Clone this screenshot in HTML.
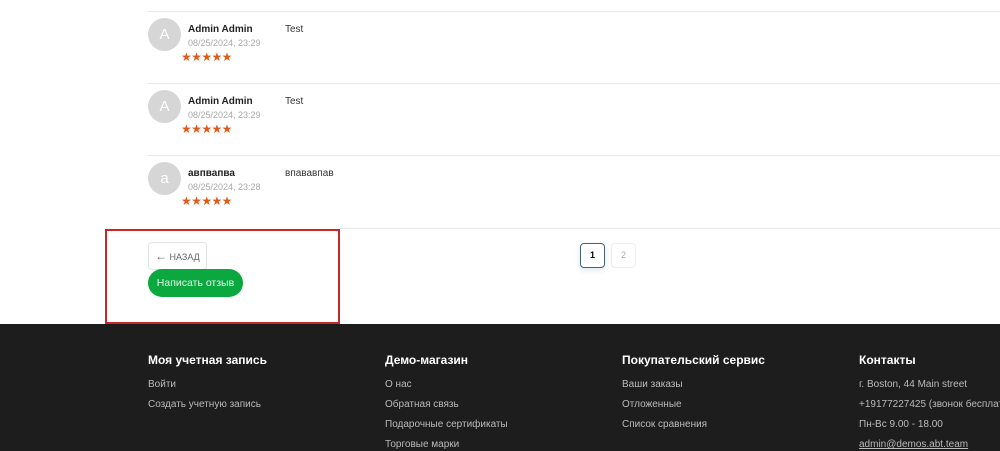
<!DOCTYPE html>
<html><head><meta charset="utf-8"><style>
*{margin:0;padding:0;box-sizing:border-box}
body{width:1000px;height:451px;overflow:hidden;background:#fff;font-family:"Liberation Sans",sans-serif;position:relative}
.a{position:absolute}
.line{position:absolute;left:148px;right:0;height:1px;background:#e8e8e8}
.av{position:absolute;left:148px;width:33px;height:33px;border-radius:50%;background:#d6d6d6;color:#fff;font-size:15px;text-align:center;line-height:33px}
.nm{position:absolute;left:188px;font-size:10px;font-weight:bold;color:#222}
.dt{position:absolute;left:188px;font-size:9px;color:#aaa}
.st{position:absolute;left:181px;font-size:12px;color:#e05a1c;letter-spacing:-0.6px}
.tx{position:absolute;left:285px;font-size:10px;color:#333}
.foot{position:absolute;left:0;top:324px;width:1000px;height:127px;background:#1d1d1d}
.h{position:absolute;top:353px;color:#fff;font-weight:bold;font-size:12px}
.l{position:absolute;color:#bbb;font-size:10px}
</style></head><body>
<div class="line" style="top:11px"></div>
<div class="av" style="top:18px">A</div><div class="nm" style="top:24px">Admin Admin</div><div class="dt" style="top:38px">08/25/2024, 23:29</div><div class="st" style="top:50px">★★★★★</div><div class="tx" style="top:24px">Test</div>
<div class="line" style="top:83px"></div>
<div class="av" style="top:90px">A</div><div class="nm" style="top:96px">Admin Admin</div><div class="dt" style="top:110px">08/25/2024, 23:29</div><div class="st" style="top:122px">★★★★★</div><div class="tx" style="top:96px">Test</div>
<div class="line" style="top:155px"></div>
<div class="av" style="top:162px">a</div><div class="nm" style="top:168px">авпвапва</div><div class="dt" style="top:182px">08/25/2024, 23:28</div><div class="st" style="top:194px">★★★★★</div><div class="tx" style="top:168px">впававпав</div>
<div class="line" style="top:228px;left:340px"></div>
<div class="a" style="left:105px;top:229px;width:235px;height:95px;border:2px solid #c62828"></div>
<div class="a" style="left:148px;top:242px;width:59px;height:28px;border:1px solid #e3e3e3;border-radius:4px;font-size:9px;color:#666;line-height:26px;padding-left:6px"><span style="font-size:12px">←</span> НАЗАД</div>
<div class="a" style="left:148px;top:269px;width:95px;height:28px;border-radius:14px;background:#0aa83f;color:#e8f8ec;font-size:10.5px;line-height:28px;text-align:center">Написать отзыв</div>
<div class="a" style="left:580px;top:243px;width:25px;height:25px;border:1.5px solid #4a6072;border-radius:4px;font-size:9px;font-weight:bold;text-align:center;line-height:22px;box-shadow:0 2px 6px rgba(0,80,160,.15)">1</div>
<div class="a" style="left:611px;top:243px;width:25px;height:25px;border:1px solid #eee;border-radius:4px;font-size:9px;color:#aaa;text-align:center;line-height:23px">2</div>
<div class="foot"></div>
<div class="h" style="left:148px">Моя учетная запись</div>
<div class="h" style="left:385px">Демо-магазин</div>
<div class="h" style="left:622px">Покупательский сервис</div>
<div class="h" style="left:859px">Контакты</div>
<div class="l" style="left:148px;top:379px">Войти</div><div class="l" style="left:148px;top:399px">Создать учетную запись</div>
<div class="l" style="left:385px;top:379px">О нас</div><div class="l" style="left:385px;top:399px">Обратная связь</div><div class="l" style="left:385px;top:419px">Подарочные сертификаты</div><div class="l" style="left:385px;top:439px">Торговые марки</div>
<div class="l" style="left:622px;top:379px">Ваши заказы</div><div class="l" style="left:622px;top:399px">Отложенные</div><div class="l" style="left:622px;top:419px">Список сравнения</div>
<div class="l" style="left:859px;top:379px">г. Boston, 44 Main street</div><div class="l" style="left:859px;top:399px;white-space:nowrap">+19177227425 (звонок бесплатный)</div><div class="l" style="left:859px;top:419px">Пн-Вс 9.00 - 18.00</div><div class="l" style="left:859px;top:439px;text-decoration:underline">admin@demos.abt.team</div>
</body></html>
